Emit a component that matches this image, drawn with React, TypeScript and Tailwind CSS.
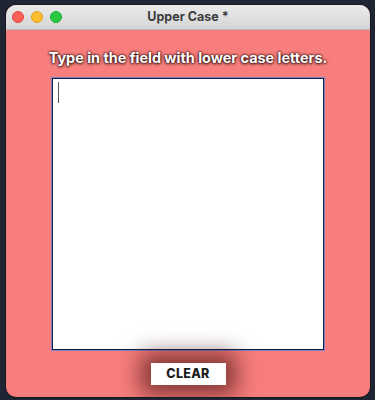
export default function App() {
  return (
    <div className="w-[375px] h-[400px] bg-[#1f2533] overflow-hidden pt-[5px] px-[6px] font-['Inter','Liberation_Sans',sans-serif]">
      <div className="w-[364px] h-[392px] rounded-[10px] overflow-hidden flex flex-col bg-[#f77e7c] shadow-[0_0_0_1px_rgba(0,0,0,0.35)]">
        {/* title bar */}
        <div className="h-[25px] shrink-0 relative flex items-center justify-center bg-gradient-to-b from-[#ebebeb] to-[#d5d5d5] border-b border-[#b9b9b9]">
          <div className="absolute left-[6px] top-[6px] flex gap-[7px]">
            <span className="w-[12px] h-[12px] rounded-full bg-[#fe5f57] border border-[#e14942]" />
            <span className="w-[12px] h-[12px] rounded-full bg-[#febc2e] border border-[#dfa023]" />
            <span className="w-[12px] h-[12px] rounded-full bg-[#28c840] border border-[#1dad2b]" />
          </div>
          <span className="text-[12.5px] font-bold text-[#3c3c3c]">Upper Case *</span>
        </div>
        {/* body */}
        <div className="flex-1 flex flex-col items-center">
          <p className="mt-[18px] text-[14.4px] leading-[20px] font-bold text-white [text-shadow:0_0_3px_rgba(50,0,0,0.95),0_0_2px_rgba(0,0,0,0.7),0_1px_3px_rgba(0,0,0,0.6)]">
            Type in the field with lower case letters.
          </p>
          <div className="mt-[9px] w-[274px] h-[274px] shrink-0 border border-[#7b80c8] bg-white">
            <div className="w-full h-full border-[1.5px] border-[#1a1f3c] bg-white pl-[5px] pt-[3px]">
              <div className="w-[1px] h-[21px] bg-[#555]" />
            </div>
          </div>
          <button className="relative z-10 mt-[12px] w-[75px] h-[22px] bg-white text-[12.5px] font-extrabold text-[#1c1c1c] tracking-[0.3px] shadow-[0_0_22px_10px_rgba(50,5,5,0.6)]">
            CLEAR
          </button>
        </div>
      </div>
    </div>
  );
}
